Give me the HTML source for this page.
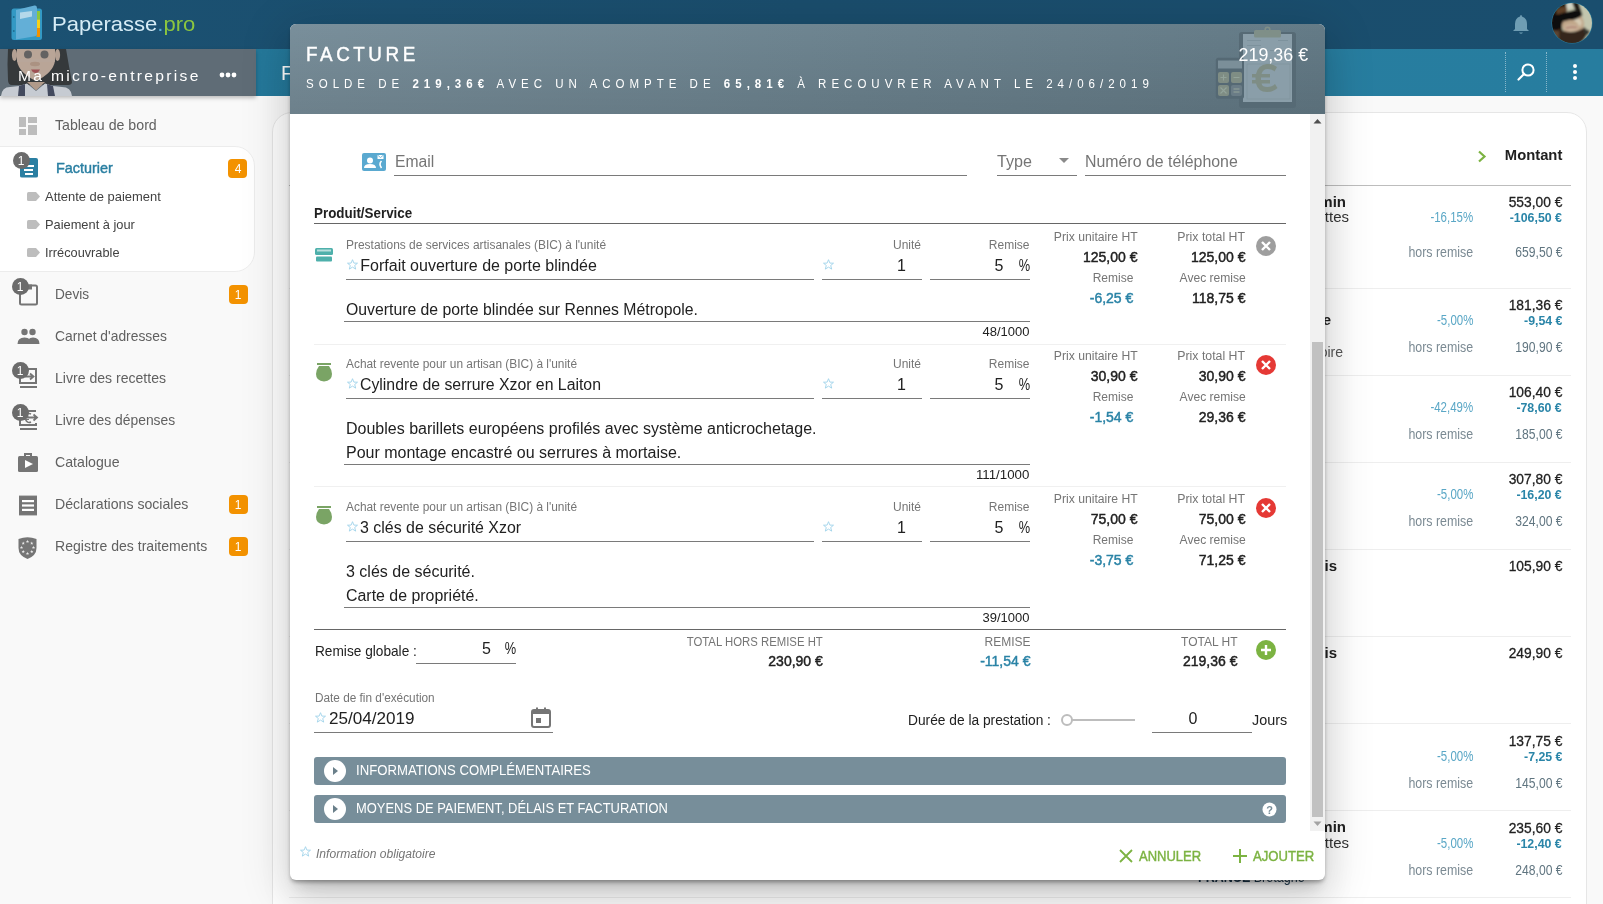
<!DOCTYPE html>
<html><head><meta charset="utf-8"><title>Facture</title><style>
*{margin:0;padding:0;box-sizing:border-box}
html,body{width:1603px;height:904px;overflow:hidden;background:#f9f9f9;font-family:"Liberation Sans", sans-serif}
.t{position:absolute;white-space:nowrap;line-height:1em;font-family:"Liberation Sans", sans-serif}
#bg{position:absolute;left:0;top:0;width:1603px;height:904px;overflow:hidden;will-change:transform}
#modal{position:absolute;left:290px;top:24px;width:1035px;height:856px;border-radius:6px;background:#fff;
 box-shadow:0 3px 4px -1px rgba(0,0,0,.35),0 11px 15px -7px rgba(0,0,0,.2),0 24px 38px 3px rgba(0,0,0,.08),0 9px 46px 8px rgba(0,0,0,.12)}
#fg{position:absolute;left:0;top:0;width:1603px;height:904px;overflow:hidden;will-change:transform}
</style></head>
<body>
<div id="bg">
<div style="position:absolute;left:0px;top:0px;width:1603px;height:49px;background:linear-gradient(90deg,#1b5172 0%,#1a4d6c 50%,#1a4e6e 100%)"></div>
<div style="position:absolute;left:256px;top:49px;width:1347px;height:47px;background:linear-gradient(90deg,#24789a 0%,#277ea1 30%,#277d9f 100%)"></div>
<div style="position:absolute;left:1505px;top:52px;width:1px;height:40px;border-left:1px dotted rgba(255,255,255,.45)"></div>
<div style="position:absolute;left:1546px;top:52px;width:1px;height:40px;border-left:1px dotted rgba(255,255,255,.45)"></div>
<div style="position:absolute;left:0px;top:49px;width:256px;height:47px;background:#5f6c76;box-shadow:0 2px 4px rgba(0,0,0,.25)"></div>
<svg style="position:absolute;left:0px;top:49px" width="76" height="47" viewBox="0 0 76 47">
<path d="M8 0 L66 0 Q69 18 72 33 Q72 36 68 36 L12 36 Q8 36 8 31 Q7 15 8 0 Z" fill="#35393b"/>
<ellipse cx="14.5" cy="6" rx="2.6" ry="6" fill="#b3a093"/><ellipse cx="57.5" cy="6" rx="2.6" ry="6" fill="#b3a093"/>
<path d="M17 0 L55 0 L55 12 Q53 24 36 32 Q19 24 17 12 Z" fill="#b9a597"/>
<rect x="17" y="10" width="38" height="3" fill="#b7a79c" opacity="0.6"/>
<circle cx="28" cy="5.5" r="4" fill="#636262"/><circle cx="44.5" cy="5.5" r="4" fill="#636262"/>
<ellipse cx="35" cy="15" rx="5" ry="2.2" fill="#ab9282"/>
<path d="M31 20.5 L40 20.5 Q38 24.5 35 24 Q32 23 31 20.5 Z" fill="#9e5054"/>
<path d="M27 33 L45 33 L36 41.5 Z" fill="#b09a8a"/>
<path d="M1 47 Q2 38 10 38 L19 37 L27 34.5 L36 42 L45 34.5 L53 37 L62 38 Q71 38 72 47 Z" fill="#c6cbd2"/>
<path d="M19 37 L25 35 L25 47 L18 47 Z" fill="#434a5e"/><path d="M47 35 L53 37 L55 47 L48 47 Z" fill="#434a5e"/>
</svg>
<svg style="position:absolute;left:219px;top:72px" width="18" height="6" viewBox="0 0 18 6"><circle cx="3" cy="3" r="2.4" fill="#fff"/><circle cx="9" cy="3" r="2.4" fill="#fff"/><circle cx="15" cy="3" r="2.4" fill="#fff"/></svg>
<svg style="position:absolute;left:0px;top:0px" width="50" height="49" viewBox="0 0 50 49">
<rect x="11.5" y="8.5" width="30.5" height="31.5" rx="2.5" fill="#3399c4"/>
<rect x="36.5" y="11" width="3.5" height="8.5" fill="#8cc63f"/><rect x="36.5" y="19.5" width="3.5" height="8.5" fill="#f7d117"/><rect x="36.5" y="28" width="3.5" height="9" fill="#f39200"/>
<path d="M16 10 L34.5 5.5 Q37 5 37 8 L37 34 Q37 36 35 36.3 L16 39.5 Z" fill="#63afd7"/>
<path d="M20 12.5 L32 11 L32 16.5 L20 19 Z" fill="#b5d8ea"/>
<circle cx="13.8" cy="17" r="0.9" fill="#1f6d90"/><circle cx="13.8" cy="31" r="0.9" fill="#1f6d90"/>
</svg>
<svg style="position:absolute;left:1512px;top:13px" width="18" height="22" viewBox="0 0 18 22"><path d="M9 2 Q10 2 10 3.5 Q15 5 15 11 L15 16 L17 18 L1 18 L3 16 L3 11 Q3 5 8 3.5 Q8 2 9 2 Z" fill="#6f9db3"/><path d="M7 19.5 Q9 22 11 19.5 Z" fill="#6f9db3"/></svg>
<svg style="position:absolute;left:1551px;top:2px" width="42" height="42" viewBox="0 0 42 42">
<defs><clipPath id="avc"><circle cx="21" cy="21" r="20"/></clipPath><filter id="avb"><feGaussianBlur stdDeviation="0.8"/></filter></defs>
<circle cx="21" cy="21" r="20.6" fill="#2a7896"/>
<g clip-path="url(#avc)"><g filter="url(#avb)">
<rect x="-2" y="-2" width="46" height="46" fill="#c3c6ae"/>
<path d="M-2 -2 L17 -2 L14 8 L10 16 L12 34 L4 40 L-2 40 Z" fill="#22170c"/>
<path d="M5 7 Q10 4 17 5 L15 11 L6 14 Z" fill="#5e4028"/>
<path d="M15 -2 L22 -2 L23 5 L16 7 Z" fill="#d4d4c6"/>
<path d="M12 14 L29 12 Q33 17 33 23 L31 29 L14 30 Q9 23 12 14 Z" fill="#bfa588"/>
<path d="M24 15 Q30 16 31 21 L29 25 Q26 20 22 18 Z" fill="#d6cab2"/>
<path d="M2 14 L13 10.5 L29.5 6.5 L31.5 13 Q26 18.5 18 18 L12 19.5 L8 30 L1 30 Z" fill="#0d0b09"/>
<path d="M20 -2 L27 -2 L30 9 L25 10 Z" fill="#221d18"/>
<path d="M14 23 Q20 21.5 27 23.5 L27.5 28 Q20 30 14 28.5 Z" fill="#ccb39a"/>
<path d="M15 26 Q20 24.5 26 25.5" stroke="#8a4a4a" stroke-width="0.9" fill="none"/>
<path d="M7 26 Q14 30.5 20 30 Q27 30 34 25 L36 33 Q30 44 21 44 Q11 43 6 36 Z" fill="#35251a"/>
<path d="M2 28 L8 29 L8 40 L2 37 Z" fill="#5d4430"/>
<path d="M33 26 L39 29 L37 33 L33 31 Z" fill="#30302a"/>
</g></g></svg>
<svg style="position:absolute;left:1516px;top:62px" width="20" height="20" viewBox="0 0 20 20"><circle cx="12" cy="8" r="5.6" stroke="#fff" stroke-width="2" fill="none"/><path d="M8 12 L2.5 17.5" stroke="#fff" stroke-width="2.2" stroke-linecap="round"/></svg>
<svg style="position:absolute;left:1571px;top:63px" width="8" height="18" viewBox="0 0 8 18"><circle cx="4" cy="3" r="2" fill="#fff"/><circle cx="4" cy="9" r="2" fill="#fff"/><circle cx="4" cy="15" r="2" fill="#fff"/></svg>
<div style="position:absolute;left:-1px;top:146px;width:256px;height:126px;background:#fff;border:1px solid #ececec;border-radius:0 20px 20px 0"></div>
<svg style="position:absolute;left:19px;top:117px" width="18" height="18" viewBox="0 0 18 18"><rect x="0" y="0" width="7" height="10" fill="#bdbdbd"/><rect x="9" y="0" width="9" height="6" fill="#bdbdbd"/><rect x="0" y="12" width="7" height="6" fill="#bdbdbd"/><rect x="9" y="8" width="9" height="10" fill="#bdbdbd"/></svg>
<svg style="position:absolute;left:19px;top:157px" width="20" height="21" viewBox="0 0 20 21"><path d="M1 3 Q1 1 3 1 L17 1 Q19 1 19 3 L19 19 Q19 20.5 17 20.5 L3 20.5 Q1 20.5 1 19 Z" fill="#2a7fa2"/><rect x="6" y="8" width="9" height="2" fill="#fff"/><rect x="5" y="12" width="9" height="2" fill="#fff"/><rect x="6" y="16" width="8" height="2" fill="#fff"/></svg>
<svg style="position:absolute;left:26.5px;top:192px" width="13" height="9" viewBox="0 0 13 9"><path d="M1.5 0 L9 0 L13 4.5 L9 9 L1.5 9 Q0 9 0 7.5 L0 1.5 Q0 0 1.5 0 Z" fill="#bdbdbd"/></svg>
<svg style="position:absolute;left:26.5px;top:220px" width="13" height="9" viewBox="0 0 13 9"><path d="M1.5 0 L9 0 L13 4.5 L9 9 L1.5 9 Q0 9 0 7.5 L0 1.5 Q0 0 1.5 0 Z" fill="#bdbdbd"/></svg>
<svg style="position:absolute;left:26.5px;top:248px" width="13" height="9" viewBox="0 0 13 9"><path d="M1.5 0 L9 0 L13 4.5 L9 9 L1.5 9 Q0 9 0 7.5 L0 1.5 Q0 0 1.5 0 Z" fill="#bdbdbd"/></svg>
<div style="position:absolute;left:228.5px;top:284.5px;width:19px;height:19px;background:#f39200;border-radius:4px"></div>
<div style="position:absolute;left:228.5px;top:494.5px;width:19px;height:19px;background:#f39200;border-radius:4px"></div>
<div style="position:absolute;left:228.5px;top:536.5px;width:19px;height:19px;background:#f39200;border-radius:4px"></div>
<div style="position:absolute;left:228.4px;top:158.7px;width:19px;height:19px;background:#f39200;border-radius:4px"></div>
<svg style="position:absolute;left:18px;top:283px" width="21" height="23" viewBox="0 0 21 23"><rect x="2" y="2.5" width="17" height="19" rx="1.5" fill="none" stroke="#757575" stroke-width="2"/><rect x="9" y="1.5" width="5" height="5" fill="#757575"/></svg>
<svg style="position:absolute;left:17px;top:328px" width="23" height="17" viewBox="0 0 23 17"><circle cx="7.5" cy="4" r="3.2" fill="#757575"/><circle cx="15.5" cy="4" r="3.2" fill="#757575"/><path d="M0.5 16 Q0.5 9.5 7.5 9.5 Q14.5 9.5 14.5 16 Z" fill="#757575"/><path d="M10 16 Q10 9.5 16 9.5 Q22.5 9.5 22.5 16 Z" fill="#757575"/></svg>
<svg style="position:absolute;left:18px;top:367px" width="21" height="23" viewBox="0 0 21 23"><path d="M7 2 L18 2 L18 16 L2 16 L2 10" fill="none" stroke="#757575" stroke-width="2"/><rect x="2" y="19" width="17" height="2" fill="#757575"/><path d="M7 9.5 L15 9.5 M12 6.5 L15.5 9.5 L12 12.5" stroke="#757575" stroke-width="1.8" fill="none"/></svg>
<svg style="position:absolute;left:18px;top:409px" width="21" height="23" viewBox="0 0 21 23"><path d="M7 2 L18 2 M18 14 L18 16 L2 16 L2 10" fill="none" stroke="#757575" stroke-width="2"/><rect x="2" y="19" width="17" height="2" fill="#757575"/><path d="M8 8.5 L18.5 8.5 M15.5 5.5 L19 8.5 L15.5 11.5" stroke="#757575" stroke-width="1.8" fill="none"/><path d="M13 5 Q11 4 9.5 5 Q7.5 6.5 7.5 9 Q7.5 12 9.5 13 Q11 14 13 13" stroke="#757575" stroke-width="1.5" fill="none"/><path d="M6 8 L11 8 M6 10.5 L11 10.5" stroke="#757575" stroke-width="1.2"/></svg>
<svg style="position:absolute;left:18px;top:453px" width="20" height="19" viewBox="0 0 20 19"><path d="M7 3 L7 1 L13 1 L13 3" stroke="#757575" stroke-width="2" fill="none"/><rect x="0" y="3" width="20" height="16" rx="1.5" fill="#757575"/><path d="M7 7 L15 11 L7 15 Z" fill="#fff"/></svg>
<svg style="position:absolute;left:19px;top:495px" width="18" height="21" viewBox="0 0 18 21"><path d="M0 0 L1 1.2 L2 0 L3 1.2 L4 0 L5 1.2 L6 0 L7 1.2 L8 0 L9 1.2 L10 0 L11 1.2 L12 0 L13 1.2 L14 0 L15 1.2 L16 0 L17 1.2 L18 0 L18 21 L17 19.8 L16 21 L15 19.8 L14 21 L13 19.8 L12 21 L11 19.8 L10 21 L9 19.8 L8 21 L7 19.8 L6 21 L5 19.8 L4 21 L3 19.8 L2 21 L1 19.8 L0 21 Z" fill="#757575"/><rect x="3" y="5" width="12" height="2.2" fill="#fff"/><rect x="3" y="9.4" width="12" height="2.2" fill="#fff"/><rect x="3" y="13.8" width="12" height="2.2" fill="#fff"/></svg>
<svg style="position:absolute;left:17px;top:536px" width="21" height="23" viewBox="0 0 21 23"><path d="M1.5 3 Q10.5 -0.5 19.5 3 L19.5 12 Q19.5 19.5 10.5 23 Q1.5 19.5 1.5 12 Z" fill="#757575"/><path d="M10.50 3.80 L10.95 4.88 L12.12 4.97 L11.23 5.74 L11.50 6.88 L10.50 6.26 L9.50 6.88 L9.77 5.74 L8.88 4.97 L10.05 4.88 Z" fill="#e8e8e8"/><path d="M14.74 5.56 L15.19 6.64 L16.36 6.73 L15.47 7.49 L15.74 8.63 L14.74 8.02 L13.74 8.63 L14.02 7.49 L13.13 6.73 L14.29 6.64 Z" fill="#e8e8e8"/><path d="M16.50 9.80 L16.95 10.88 L18.12 10.97 L17.23 11.74 L17.50 12.88 L16.50 12.27 L15.50 12.88 L15.77 11.74 L14.88 10.97 L16.05 10.88 Z" fill="#e8e8e8"/><path d="M14.74 14.04 L15.19 15.12 L16.36 15.22 L15.47 15.98 L15.74 17.12 L14.74 16.51 L13.74 17.12 L14.02 15.98 L13.13 15.22 L14.29 15.12 Z" fill="#e8e8e8"/><path d="M10.50 15.80 L10.95 16.88 L12.12 16.97 L11.23 17.74 L11.50 18.88 L10.50 18.27 L9.50 18.88 L9.77 17.74 L8.88 16.97 L10.05 16.88 Z" fill="#e8e8e8"/><path d="M6.26 14.04 L6.71 15.12 L7.87 15.22 L6.98 15.98 L7.26 17.12 L6.26 16.51 L5.26 17.12 L5.53 15.98 L4.64 15.22 L5.81 15.12 Z" fill="#e8e8e8"/><path d="M4.50 9.80 L4.95 10.88 L6.12 10.97 L5.23 11.74 L5.50 12.88 L4.50 12.27 L3.50 12.88 L3.77 11.74 L2.88 10.97 L4.05 10.88 Z" fill="#e8e8e8"/><path d="M6.26 5.56 L6.71 6.64 L7.87 6.73 L6.98 7.49 L7.26 8.63 L6.26 8.02 L5.26 8.63 L5.53 7.49 L4.64 6.73 L5.81 6.64 Z" fill="#e8e8e8"/></svg>
<div style="position:absolute;left:12.5px;top:152.1px;width:17px;height:17px;background:#6b6b6b;border-radius:50%"></div>
<div style="position:absolute;left:11.5px;top:278.0px;width:17px;height:17px;background:#6b6b6b;border-radius:50%"></div>
<div style="position:absolute;left:11.5px;top:362.0px;width:17px;height:17px;background:#6b6b6b;border-radius:50%"></div>
<div style="position:absolute;left:11.5px;top:404.0px;width:17px;height:17px;background:#6b6b6b;border-radius:50%"></div>
<div style="position:absolute;left:272px;top:112px;width:1314.5px;height:900px;background:#fff;border:1px solid #e6e6e6;border-radius:20px"></div>
<div style="position:absolute;left:289px;top:185px;width:1282px;height:1px;background:#bdbdbd"></div>
<div style="position:absolute;left:289px;top:288.4px;width:1282px;height:1px;background:#eeeeee"></div>
<div style="position:absolute;left:289px;top:375.4px;width:1282px;height:1px;background:#eeeeee"></div>
<div style="position:absolute;left:289px;top:462.4px;width:1282px;height:1px;background:#eeeeee"></div>
<div style="position:absolute;left:289px;top:549.4px;width:1282px;height:1px;background:#eeeeee"></div>
<div style="position:absolute;left:289px;top:636.4px;width:1282px;height:1px;background:#eeeeee"></div>
<div style="position:absolute;left:289px;top:723.4px;width:1282px;height:1px;background:#eeeeee"></div>
<div style="position:absolute;left:289px;top:810.4px;width:1282px;height:1px;background:#eeeeee"></div>
<div style="position:absolute;left:289px;top:897.4px;width:1282px;height:1px;background:#eeeeee"></div>
<svg style="position:absolute;left:1477px;top:150px" width="10" height="13" viewBox="0 0 10 13"><path d="M2 1.5 L7.5 6.5 L2 11.5" stroke="#7cb342" stroke-width="2.2" fill="none"/></svg>
<div class="t" id="t0" style="top:68px;font-size:15px;color:#fff;letter-spacing:2.2px;left:18px;transform:scaleX(1.0431);transform-origin:left;">Ma micro-entreprise</div>
<div class="t" id="t1" style="top:13px;font-size:21px;color:#d6ecf6;left:52px;transform:scaleX(1.0494);transform-origin:left;">Paperasse<span style="color:#5aa9d0">.</span><span style="color:#8cc63f">pro</span></div>
<div class="t" id="t2" style="top:63px;font-size:20px;color:#fff;left:281px;">Facturier</div>
<div class="t" id="t3" style="top:117px;font-size:15px;color:#616161;left:55px;transform:scaleX(0.9457);transform-origin:left;">Tableau de bord</div>
<div class="t" id="t4" style="top:160px;font-size:15px;color:#2a7fa2;-webkit-text-stroke:0.45px #2a7fa2;left:55.5px;transform:scaleX(0.9602);transform-origin:left;">Facturier</div>
<div class="t" id="t5" style="top:190px;font-size:13px;color:#424242;left:44.6px;transform:scaleX(0.9951);transform-origin:left;">Attente de paiement</div>
<div class="t" id="t6" style="top:218px;font-size:13px;color:#424242;left:44.6px;transform:scaleX(0.9871);transform-origin:left;">Paiement à jour</div>
<div class="t" id="t7" style="top:246px;font-size:13px;color:#424242;left:44.6px;transform:scaleX(0.9819);transform-origin:left;">Irrécouvrable</div>
<div class="t" id="t8" style="top:286px;font-size:15px;color:#616161;left:55.3px;transform:scaleX(0.9103);transform-origin:left;">Devis</div>
<div class="t" id="t9" style="top:289px;font-size:12px;color:#fff;left:238px;transform:translateX(-50%);">1</div>
<div class="t" id="t10" style="top:328px;font-size:15px;color:#616161;left:55.3px;transform:scaleX(0.9224);transform-origin:left;">Carnet d'adresses</div>
<div class="t" id="t11" style="top:370px;font-size:15px;color:#616161;left:55.3px;transform:scaleX(0.9375);transform-origin:left;">Livre des recettes</div>
<div class="t" id="t12" style="top:412px;font-size:15px;color:#616161;left:55.3px;transform:scaleX(0.9239);transform-origin:left;">Livre des dépenses</div>
<div class="t" id="t13" style="top:454px;font-size:15px;color:#616161;left:55.3px;transform:scaleX(0.9431);transform-origin:left;">Catalogue</div>
<div class="t" id="t14" style="top:496px;font-size:15px;color:#616161;left:55.3px;transform:scaleX(0.9411);transform-origin:left;">Déclarations sociales</div>
<div class="t" id="t15" style="top:499px;font-size:12px;color:#fff;left:238px;transform:translateX(-50%);">1</div>
<div class="t" id="t16" style="top:538px;font-size:15px;color:#616161;left:55.3px;transform:scaleX(0.9363);transform-origin:left;">Registre des traitements</div>
<div class="t" id="t17" style="top:541px;font-size:12px;color:#fff;left:238px;transform:translateX(-50%);">1</div>
<div class="t" id="t18" style="top:163px;font-size:12px;color:#fff;left:238px;transform:translateX(-50%);">4</div>
<div class="t" id="t19" style="top:155px;font-size:12px;color:#fff;left:21px;transform:translateX(-50%);">1</div>
<div class="t" id="t20" style="top:281px;font-size:12px;color:#fff;left:20px;transform:translateX(-50%);">1</div>
<div class="t" id="t21" style="top:365px;font-size:12px;color:#fff;left:20px;transform:translateX(-50%);">1</div>
<div class="t" id="t22" style="top:407px;font-size:12px;color:#fff;left:20px;transform:translateX(-50%);">1</div>
<div class="t" id="t23" style="top:147px;font-size:15px;color:#212121;font-weight:700;right:41px;transform:scaleX(0.9859);transform-origin:right;">Montant</div>
<div class="t" id="t24" style="top:194px;font-size:15px;color:#212121;right:41px;transform:scaleX(0.9200);transform-origin:right;-webkit-text-stroke:0.3px #212121;">553,00 €</div>
<div class="t" id="t25" style="top:211px;font-size:13px;color:#2a85a8;font-weight:700;right:41px;transform:scaleX(0.9500);transform-origin:right;">-106,50 €</div>
<div class="t" id="t26" style="top:210px;font-size:14px;color:#5aa7c6;right:130px;transform:scaleX(0.8200);transform-origin:right;">-16,15%</div>
<div class="t" id="t27" style="top:245px;font-size:14px;color:#7b8a93;right:130px;transform:scaleX(0.8850);transform-origin:right;">hors remise</div>
<div class="t" id="t28" style="top:245px;font-size:14px;color:#607580;right:41px;transform:scaleX(0.8660);transform-origin:right;">659,50 €</div>
<div class="t" id="t29" style="top:297px;font-size:15px;color:#212121;right:41px;transform:scaleX(0.9200);transform-origin:right;-webkit-text-stroke:0.3px #212121;">181,36 €</div>
<div class="t" id="t30" style="top:314px;font-size:13px;color:#2a85a8;font-weight:700;right:41px;transform:scaleX(0.9500);transform-origin:right;">-9,54 €</div>
<div class="t" id="t31" style="top:313px;font-size:14px;color:#5aa7c6;right:130px;transform:scaleX(0.8200);transform-origin:right;">-5,00%</div>
<div class="t" id="t32" style="top:340px;font-size:14px;color:#7b8a93;right:130px;transform:scaleX(0.8850);transform-origin:right;">hors remise</div>
<div class="t" id="t33" style="top:340px;font-size:14px;color:#607580;right:41px;transform:scaleX(0.8660);transform-origin:right;">190,90 €</div>
<div class="t" id="t34" style="top:384px;font-size:15px;color:#212121;right:41px;transform:scaleX(0.9200);transform-origin:right;-webkit-text-stroke:0.3px #212121;">106,40 €</div>
<div class="t" id="t35" style="top:401px;font-size:13px;color:#2a85a8;font-weight:700;right:41px;transform:scaleX(0.9500);transform-origin:right;">-78,60 €</div>
<div class="t" id="t36" style="top:400px;font-size:14px;color:#5aa7c6;right:130px;transform:scaleX(0.8200);transform-origin:right;">-42,49%</div>
<div class="t" id="t37" style="top:427px;font-size:14px;color:#7b8a93;right:130px;transform:scaleX(0.8850);transform-origin:right;">hors remise</div>
<div class="t" id="t38" style="top:427px;font-size:14px;color:#607580;right:41px;transform:scaleX(0.8660);transform-origin:right;">185,00 €</div>
<div class="t" id="t39" style="top:471px;font-size:15px;color:#212121;right:41px;transform:scaleX(0.9200);transform-origin:right;-webkit-text-stroke:0.3px #212121;">307,80 €</div>
<div class="t" id="t40" style="top:488px;font-size:13px;color:#2a85a8;font-weight:700;right:41px;transform:scaleX(0.9500);transform-origin:right;">-16,20 €</div>
<div class="t" id="t41" style="top:487px;font-size:14px;color:#5aa7c6;right:130px;transform:scaleX(0.8200);transform-origin:right;">-5,00%</div>
<div class="t" id="t42" style="top:514px;font-size:14px;color:#7b8a93;right:130px;transform:scaleX(0.8850);transform-origin:right;">hors remise</div>
<div class="t" id="t43" style="top:514px;font-size:14px;color:#607580;right:41px;transform:scaleX(0.8660);transform-origin:right;">324,00 €</div>
<div class="t" id="t44" style="top:558px;font-size:15px;color:#212121;right:41px;transform:scaleX(0.9200);transform-origin:right;-webkit-text-stroke:0.3px #212121;">105,90 €</div>
<div class="t" id="t45" style="top:645px;font-size:15px;color:#212121;right:41px;transform:scaleX(0.9200);transform-origin:right;-webkit-text-stroke:0.3px #212121;">249,90 €</div>
<div class="t" id="t46" style="top:733px;font-size:15px;color:#212121;right:41px;transform:scaleX(0.9200);transform-origin:right;-webkit-text-stroke:0.3px #212121;">137,75 €</div>
<div class="t" id="t47" style="top:750px;font-size:13px;color:#2a85a8;font-weight:700;right:41px;transform:scaleX(0.9500);transform-origin:right;">-7,25 €</div>
<div class="t" id="t48" style="top:749px;font-size:14px;color:#5aa7c6;right:130px;transform:scaleX(0.8200);transform-origin:right;">-5,00%</div>
<div class="t" id="t49" style="top:776px;font-size:14px;color:#7b8a93;right:130px;transform:scaleX(0.8850);transform-origin:right;">hors remise</div>
<div class="t" id="t50" style="top:776px;font-size:14px;color:#607580;right:41px;transform:scaleX(0.8660);transform-origin:right;">145,00 €</div>
<div class="t" id="t51" style="top:820px;font-size:15px;color:#212121;right:41px;transform:scaleX(0.9200);transform-origin:right;-webkit-text-stroke:0.3px #212121;">235,60 €</div>
<div class="t" id="t52" style="top:837px;font-size:13px;color:#2a85a8;font-weight:700;right:41px;transform:scaleX(0.9500);transform-origin:right;">-12,40 €</div>
<div class="t" id="t53" style="top:836px;font-size:14px;color:#5aa7c6;right:130px;transform:scaleX(0.8200);transform-origin:right;">-5,00%</div>
<div class="t" id="t54" style="top:863px;font-size:14px;color:#7b8a93;right:130px;transform:scaleX(0.8850);transform-origin:right;">hors remise</div>
<div class="t" id="t55" style="top:863px;font-size:14px;color:#607580;right:41px;transform:scaleX(0.8660);transform-origin:right;">248,00 €</div>
<div class="t" id="t56" style="top:194px;font-size:15px;color:#212121;font-weight:700;right:257px;">min</div>
<div class="t" id="t57" style="top:209px;font-size:15px;color:#333;right:254px;">ttes</div>
<div class="t" id="t58" style="top:312px;font-size:15px;color:#212121;font-weight:700;right:272px;">e</div>
<div class="t" id="t59" style="top:345px;font-size:14px;color:#555;right:260px;">oire</div>
<div class="t" id="t60" style="top:558px;font-size:15px;color:#212121;font-weight:700;right:266px;">ris</div>
<div class="t" id="t61" style="top:645px;font-size:15px;color:#212121;font-weight:700;right:266px;">ris</div>
<div class="t" id="t62" style="top:819px;font-size:15px;color:#212121;font-weight:700;right:257px;">min</div>
<div class="t" id="t63" style="top:835px;font-size:15px;color:#333;right:254px;">ttes</div>
<div class="t" id="t64" style="top:869px;font-size:15px;color:#1e3a50;left:1198px;transform:scaleX(0.8360);transform-origin:left;"><b>FRANCE</b> Bretagne</div>
</div>
<div id="modal"></div>
<div id="fg">
<div style="position:absolute;left:290px;top:24px;width:1035px;height:90px;background:linear-gradient(180deg,rgba(0,0,0,0) 0%,rgba(0,0,0,.1) 100%),linear-gradient(90deg,#798f9b 0%,#6e8591 50%,#647b87 100%);border-radius:6px 6px 0 0"></div>
<svg style="position:absolute;left:1212px;top:26px" width="90" height="84" viewBox="0 0 90 84">
<rect x="27" y="6" width="57" height="76" rx="3" fill="#566a75"/>
<rect x="31" y="8" width="49" height="68" fill="#8a9ea9"/>
<rect x="35" y="14" width="14" height="1" fill="#7d929d"/><rect x="66" y="14" width="10" height="1" fill="#7d929d"/>
<rect x="35" y="19" width="14" height="1" fill="#7d929d"/><rect x="58" y="24" width="16" height="1" fill="#7d929d"/>
<rect x="35" y="38" width="43" height="35" fill="none" stroke="#7f949f" stroke-width="0.8"/>
<rect x="42" y="4" width="27" height="7.5" rx="1.5" fill="#7f8f88"/>
<circle cx="55.5" cy="3.5" r="2.3" fill="none" stroke="#7f8f88" stroke-width="1.6"/>
<path d="M65 41 Q60 37.5 55 38 Q46 39 44 48 L40 48 L40 51.5 L43.5 51.5 L43.5 54 L40 54 L40 57.5 L44 57.5 Q46 66 55 66 Q61 66 65.5 62 L63 58 Q60 61 55.5 61 Q50 61 49.5 57.5 L58 57.5 L58 54 L49 54 L49 51.5 L58 51.5 L58 48 L49.5 48 Q51 43 55.5 43 Q60 43 62.5 45.5 Z" fill="#7e8d85"/>
<rect x="3.8" y="31.8" width="28.2" height="41" rx="2.5" fill="#556974"/>
<rect x="6" y="34.5" width="24" height="8" fill="#7b8f99"/>
<rect x="6" y="46" width="11" height="11" rx="2" fill="#7f8d84"/><rect x="19" y="46" width="11" height="11" rx="2" fill="#7f8d84"/>
<rect x="6" y="59" width="11" height="11" rx="2" fill="#7f8d84"/><rect x="19" y="59" width="11" height="11" rx="2" fill="#6a7c86"/>
<path d="M11.5 48.5 L11.5 54.5 M8.5 51.5 L14.5 51.5 M21.5 51.5 L27.5 51.5 M8.5 61.5 L14.5 67.5 M14.5 61.5 L8.5 67.5 M21.5 63 L27.5 63 M21.5 66 L27.5 66" stroke="#93a39a" stroke-width="1.1"/>
</svg>
<div style="position:absolute;left:1310px;top:114px;width:15px;height:717px;background:#f1f1f1"></div>
<div style="position:absolute;left:1312px;top:342px;width:11px;height:475px;background:#c1c1c1"></div>
<svg style="position:absolute;left:1312px;top:117px" width="11" height="8" viewBox="0 0 11 8"><path d="M1.5 6.5 L5.5 2 L9.5 6.5 Z" fill="#505050"/></svg>
<svg style="position:absolute;left:1312px;top:820px" width="11" height="8" viewBox="0 0 11 8"><path d="M1.5 1.5 L5.5 6 L9.5 1.5 Z" fill="#a3a3a3"/></svg>
<svg style="position:absolute;left:362px;top:153px" width="24" height="18" viewBox="0 0 24 18"><rect x="0" y="0" width="24" height="18" rx="2" fill="#5aa9d0"/>
<circle cx="8" cy="7.5" r="3" fill="#fff"/><path d="M2 15 Q2 11 8 11 Q14 11 14 15 Z" fill="#fff"/>
<rect x="15.5" y="2" width="6" height="4" fill="#fff"/><path d="M15.5 2 L18.5 4.5 L21.5 2" stroke="#5aa9d0" stroke-width="0.8" fill="none"/>
<path d="M19.5 8 Q16.5 11 19.5 15" stroke="#fff" stroke-width="1.6" fill="none"/></svg>
<div style="position:absolute;left:394px;top:175px;width:573px;height:1px;background:#7a7a7a"></div>
<svg style="position:absolute;left:1059px;top:158px" width="11" height="6" viewBox="0 0 11 6"><path d="M0 0 L10 0 L5 5 Z" fill="#8a8a8a"/></svg>
<div style="position:absolute;left:997px;top:175px;width:80px;height:1px;background:#7a7a7a"></div>
<div style="position:absolute;left:1085px;top:175px;width:201px;height:1px;background:#7a7a7a"></div>
<div style="position:absolute;left:314px;top:223px;width:972px;height:1px;background:#666"></div>
<svg style="position:absolute;left:315px;top:248.4px" width="18" height="14" viewBox="0 0 18 14"><rect x="0" y="0" width="18" height="7" rx="1.5" fill="#4eb0ab"/><rect x="2" y="1.5" width="14" height="2" fill="#fff" opacity="0.6"/><rect x="1" y="8.5" width="16" height="5" rx="1" fill="#4eb0ab"/></svg>
<svg style="position:absolute;left:347px;top:259px" width="11" height="11" viewBox="0 0 11 11"><path d="M5.5 0.7 L6.9 4.1 L10.5 4.2 L7.7 6.5 L8.7 10.1 L5.5 8.1 L2.3 10.1 L3.3 6.5 L0.5 4.2 L4.1 4.1 Z" fill="none" stroke="#9fd2ea" stroke-width="0.9" stroke-linejoin="round"/></svg>
<div style="position:absolute;left:346px;top:279px;width:468px;height:1px;background:#7a7a7a"></div>
<svg style="position:absolute;left:823px;top:259px" width="11" height="11" viewBox="0 0 11 11"><path d="M5.5 0.7 L6.9 4.1 L10.5 4.2 L7.7 6.5 L8.7 10.1 L5.5 8.1 L2.3 10.1 L3.3 6.5 L0.5 4.2 L4.1 4.1 Z" fill="none" stroke="#9fd2ea" stroke-width="0.9" stroke-linejoin="round"/></svg>
<div style="position:absolute;left:822px;top:279px;width:100px;height:1px;background:#7a7a7a"></div>
<div style="position:absolute;left:930px;top:279px;width:100px;height:1px;background:#7a7a7a"></div>
<div style="position:absolute;left:344px;top:321px;width:686px;height:1px;background:#7a7a7a"></div>
<svg style="position:absolute;left:1256px;top:236px" width="20" height="20" viewBox="0 0 20 20"><circle cx="10" cy="10" r="10" fill="#9e9e9e"/><path d="M6 6 L14 14 M14 6 L6 14" stroke="#fff" stroke-width="2.4"/></svg>
<div style="position:absolute;left:314px;top:344px;width:972px;height:1px;background:#f0f0f0"></div>
<svg style="position:absolute;left:316px;top:363.4px" width="16" height="19" viewBox="0 0 16 19"><rect x="1" y="0" width="14" height="2" fill="#7aa465"/><path d="M3 3 L13 3 Q16 7 16 11 Q16 18 8 18.5 Q0 18 0 11 Q0 7 3 3 Z" fill="#7aa465"/></svg>
<svg style="position:absolute;left:347px;top:378px" width="11" height="11" viewBox="0 0 11 11"><path d="M5.5 0.7 L6.9 4.1 L10.5 4.2 L7.7 6.5 L8.7 10.1 L5.5 8.1 L2.3 10.1 L3.3 6.5 L0.5 4.2 L4.1 4.1 Z" fill="none" stroke="#9fd2ea" stroke-width="0.9" stroke-linejoin="round"/></svg>
<div style="position:absolute;left:346px;top:398px;width:468px;height:1px;background:#7a7a7a"></div>
<svg style="position:absolute;left:823px;top:378px" width="11" height="11" viewBox="0 0 11 11"><path d="M5.5 0.7 L6.9 4.1 L10.5 4.2 L7.7 6.5 L8.7 10.1 L5.5 8.1 L2.3 10.1 L3.3 6.5 L0.5 4.2 L4.1 4.1 Z" fill="none" stroke="#9fd2ea" stroke-width="0.9" stroke-linejoin="round"/></svg>
<div style="position:absolute;left:822px;top:398px;width:100px;height:1px;background:#7a7a7a"></div>
<div style="position:absolute;left:930px;top:398px;width:100px;height:1px;background:#7a7a7a"></div>
<div style="position:absolute;left:344px;top:464px;width:686px;height:1px;background:#7a7a7a"></div>
<svg style="position:absolute;left:1256px;top:355px" width="20" height="20" viewBox="0 0 20 20"><circle cx="10" cy="10" r="10" fill="#e53935"/><path d="M6 6 L14 14 M14 6 L6 14" stroke="#fff" stroke-width="2.4"/></svg>
<div style="position:absolute;left:314px;top:486px;width:972px;height:1px;background:#f0f0f0"></div>
<svg style="position:absolute;left:316px;top:506.4px" width="16" height="19" viewBox="0 0 16 19"><rect x="1" y="0" width="14" height="2" fill="#7aa465"/><path d="M3 3 L13 3 Q16 7 16 11 Q16 18 8 18.5 Q0 18 0 11 Q0 7 3 3 Z" fill="#7aa465"/></svg>
<svg style="position:absolute;left:347px;top:521px" width="11" height="11" viewBox="0 0 11 11"><path d="M5.5 0.7 L6.9 4.1 L10.5 4.2 L7.7 6.5 L8.7 10.1 L5.5 8.1 L2.3 10.1 L3.3 6.5 L0.5 4.2 L4.1 4.1 Z" fill="none" stroke="#9fd2ea" stroke-width="0.9" stroke-linejoin="round"/></svg>
<div style="position:absolute;left:346px;top:541px;width:468px;height:1px;background:#7a7a7a"></div>
<svg style="position:absolute;left:823px;top:521px" width="11" height="11" viewBox="0 0 11 11"><path d="M5.5 0.7 L6.9 4.1 L10.5 4.2 L7.7 6.5 L8.7 10.1 L5.5 8.1 L2.3 10.1 L3.3 6.5 L0.5 4.2 L4.1 4.1 Z" fill="none" stroke="#9fd2ea" stroke-width="0.9" stroke-linejoin="round"/></svg>
<div style="position:absolute;left:822px;top:541px;width:100px;height:1px;background:#7a7a7a"></div>
<div style="position:absolute;left:930px;top:541px;width:100px;height:1px;background:#7a7a7a"></div>
<div style="position:absolute;left:344px;top:607px;width:686px;height:1px;background:#7a7a7a"></div>
<svg style="position:absolute;left:1256px;top:498px" width="20" height="20" viewBox="0 0 20 20"><circle cx="10" cy="10" r="10" fill="#e53935"/><path d="M6 6 L14 14 M14 6 L6 14" stroke="#fff" stroke-width="2.4"/></svg>
<div style="position:absolute;left:314px;top:629px;width:972px;height:1px;background:#666"></div>
<div style="position:absolute;left:416px;top:663px;width:100px;height:1px;background:#7a7a7a"></div>
<svg style="position:absolute;left:1256px;top:640px" width="20" height="20" viewBox="0 0 20 20"><circle cx="10" cy="10" r="10" fill="#7cb342"/><path d="M10 5 L10 15 M5 10 L15 10" stroke="#fff" stroke-width="2.4"/></svg>
<svg style="position:absolute;left:315px;top:711.5px" width="11" height="11" viewBox="0 0 11 11"><path d="M5.5 0.7 L6.9 4.1 L10.5 4.2 L7.7 6.5 L8.7 10.1 L5.5 8.1 L2.3 10.1 L3.3 6.5 L0.5 4.2 L4.1 4.1 Z" fill="none" stroke="#9fd2ea" stroke-width="0.9" stroke-linejoin="round"/></svg>
<svg style="position:absolute;left:531px;top:707px" width="20" height="21" viewBox="0 0 20 21"><rect x="1" y="3" width="18" height="17" rx="2" fill="none" stroke="#757575" stroke-width="2"/><rect x="1" y="3" width="18" height="4" fill="#757575"/><rect x="5" y="0.5" width="2" height="4" fill="#757575"/><rect x="13" y="0.5" width="2" height="4" fill="#757575"/><rect x="5" y="11" width="5" height="5" fill="#757575"/></svg>
<div style="position:absolute;left:314px;top:732px;width:239px;height:1px;background:#7a7a7a"></div>
<svg style="position:absolute;left:1060px;top:713px" width="78" height="14" viewBox="0 0 78 14"><path d="M12 7 L75 7" stroke="#bdbdbd" stroke-width="2"/><circle cx="7" cy="7" r="5" fill="#fff" stroke="#bdbdbd" stroke-width="2"/></svg>
<div style="position:absolute;left:1151.5px;top:731.5px;width:100px;height:1px;background:#7a7a7a"></div>
<div style="position:absolute;left:314px;top:757px;width:972px;height:27.5px;background:#778e9a;border-radius:3px"></div>
<svg style="position:absolute;left:324px;top:759.5px" width="22" height="22" viewBox="0 0 22 22"><circle cx="11" cy="11" r="11" fill="#fff"/><path d="M9 7 L14 11 L9 15 Z" fill="#6a7f8a"/></svg>
<div style="position:absolute;left:314px;top:795px;width:972px;height:27.5px;background:#778e9a;border-radius:3px"></div>
<svg style="position:absolute;left:324px;top:797.5px" width="22" height="22" viewBox="0 0 22 22"><circle cx="11" cy="11" r="11" fill="#fff"/><path d="M9 7 L14 11 L9 15 Z" fill="#6a7f8a"/></svg>
<svg style="position:absolute;left:1262px;top:802px" width="15" height="15" viewBox="0 0 15 15"><circle cx="7.5" cy="7.5" r="7" fill="#fff"/><text x="7.5" y="11.5" font-size="11" font-weight="bold" text-anchor="middle" fill="#778e9a" font-family="Liberation Sans">?</text></svg>
<svg style="position:absolute;left:299.5px;top:846px" width="11" height="11" viewBox="0 0 11 11"><path d="M5.5 0.7 L6.9 4.1 L10.5 4.2 L7.7 6.5 L8.7 10.1 L5.5 8.1 L2.3 10.1 L3.3 6.5 L0.5 4.2 L4.1 4.1 Z" fill="none" stroke="#9fd2ea" stroke-width="0.9" stroke-linejoin="round"/></svg>
<svg style="position:absolute;left:1119px;top:849px" width="14" height="14" viewBox="0 0 14 14"><path d="M1 1 L13 13 M13 1 L1 13" stroke="#7cb342" stroke-width="1.8"/></svg>
<svg style="position:absolute;left:1233px;top:849px" width="14" height="14" viewBox="0 0 14 14"><path d="M7 0 L7 14 M0 7 L14 7" stroke="#7cb342" stroke-width="2"/></svg>
<div class="t" id="t65" style="top:43px;font-size:21px;color:#fff;-webkit-text-stroke:0.45px #fff;letter-spacing:4px;left:305.5px;transform:scaleX(0.8951);transform-origin:left;">FACTURE</div>
<div class="t" id="t66" style="top:78px;font-size:12px;color:#fff;letter-spacing:5.2px;left:306px;transform:scaleX(0.9603);transform-origin:left;">SOLDE DE <b>219,36€</b> AVEC UN ACOMPTE DE <b>65,81€</b> À RECOUVRER AVANT LE 24/06/2019</div>
<div class="t" id="t67" style="top:46px;font-size:18px;color:#fff;right:294.5px;transform:scaleX(0.9918);transform-origin:right;">219,36 €</div>
<div class="t" id="t68" style="top:154px;font-size:16px;color:#757575;left:394.8px;transform:scaleX(0.9814);transform-origin:left;">Email</div>
<div class="t" id="t69" style="top:154px;font-size:16px;color:#757575;left:997px;transform:scaleX(1.0083);transform-origin:left;">Type</div>
<div class="t" id="t70" style="top:154px;font-size:16px;color:#757575;left:1085.4px;transform:scaleX(0.9927);transform-origin:left;">Numéro de téléphone</div>
<div class="t" id="t71" style="top:206px;font-size:14px;color:#212121;font-weight:700;left:314.4px;transform:scaleX(0.9560);transform-origin:left;">Produit/Service</div>
<div class="t" id="t72" style="top:239px;font-size:12px;color:#757575;left:346.3px;transform:scaleX(0.9960);transform-origin:left;">Prestations de services artisanales (BIC) à l'unité</div>
<div class="t" id="t73" style="top:258px;font-size:16px;color:#212121;left:360.3px;">Forfait ouverture de porte blindée</div>
<div class="t" id="t74" style="top:258px;font-size:16px;color:#212121;right:697px;">1</div>
<div class="t" id="t75" style="top:239px;font-size:12px;color:#757575;right:573.5px;right:682px;">Unité</div>
<div class="t" id="t76" style="top:239px;font-size:12px;color:#757575;right:573.5px;">Remise</div>
<div class="t" id="t77" style="top:258px;font-size:16px;color:#212121;right:599.5px;">5</div>
<div class="t" id="t78" style="top:258px;font-size:16px;color:#212121;right:573px;transform:scaleX(0.8000);transform-origin:right;">%</div>
<div class="t" id="t79" style="top:302px;font-size:16px;color:#212121;left:346px;transform:scaleX(0.9867);transform-origin:left;">Ouverture de porte blindée sur Rennes Métropole.</div>
<div class="t" id="t80" style="top:326px;font-size:12px;color:#212121;right:573.5px;transform:scaleX(1.0823);transform-origin:right;">48/1000</div>
<div class="t" id="t81" style="top:231px;font-size:12px;color:#757575;right:465.5px;transform:scaleX(1.0141);transform-origin:right;">Prix unitaire HT</div>
<div class="t" id="t82" style="top:250px;font-size:14px;color:#212121;-webkit-text-stroke:0.45px #212121;right:465.5px;">125,00 €</div>
<div class="t" id="t83" style="top:272px;font-size:12px;color:#757575;right:469.70000000000005px;">Remise</div>
<div class="t" id="t84" style="top:291px;font-size:14px;color:#2a83a6;-webkit-text-stroke:0.45px #2a83a6;right:469.70000000000005px;">-6,25 €</div>
<div class="t" id="t85" style="top:231px;font-size:12px;color:#757575;right:357.5px;transform:scaleX(1.0255);transform-origin:right;">Prix total HT</div>
<div class="t" id="t86" style="top:250px;font-size:14px;color:#212121;-webkit-text-stroke:0.45px #212121;right:357.5px;">125,00 €</div>
<div class="t" id="t87" style="top:272px;font-size:12px;color:#757575;right:357.5px;transform:scaleX(1.0071);transform-origin:right;">Avec remise</div>
<div class="t" id="t88" style="top:291px;font-size:14px;color:#212121;-webkit-text-stroke:0.45px #212121;right:357.5px;">118,75 €</div>
<div class="t" id="t89" style="top:358px;font-size:12px;color:#757575;left:346.3px;transform:scaleX(0.9912);transform-origin:left;">Achat revente pour un artisan (BIC) à l'unité</div>
<div class="t" id="t90" style="top:377px;font-size:16px;color:#212121;left:360.3px;transform:scaleX(0.9888);transform-origin:left;">Cylindre de serrure Xzor en Laiton</div>
<div class="t" id="t91" style="top:377px;font-size:16px;color:#212121;right:697px;">1</div>
<div class="t" id="t92" style="top:358px;font-size:12px;color:#757575;right:573.5px;right:682px;">Unité</div>
<div class="t" id="t93" style="top:358px;font-size:12px;color:#757575;right:573.5px;">Remise</div>
<div class="t" id="t94" style="top:377px;font-size:16px;color:#212121;right:599.5px;">5</div>
<div class="t" id="t95" style="top:377px;font-size:16px;color:#212121;right:573px;transform:scaleX(0.8000);transform-origin:right;">%</div>
<div class="t" id="t96" style="top:421px;font-size:16px;color:#212121;left:346px;">Doubles barillets européens profilés avec système anticrochetage.</div>
<div class="t" id="t97" style="top:445px;font-size:16px;color:#212121;left:346px;">Pour montage encastré ou serrures à mortaise.</div>
<div class="t" id="t98" style="top:469px;font-size:12px;color:#212121;right:573.5px;transform:scaleX(1.1054);transform-origin:right;">111/1000</div>
<div class="t" id="t99" style="top:350px;font-size:12px;color:#757575;right:465.5px;transform:scaleX(1.0141);transform-origin:right;">Prix unitaire HT</div>
<div class="t" id="t100" style="top:369px;font-size:14px;color:#212121;-webkit-text-stroke:0.45px #212121;right:465.5px;">30,90 €</div>
<div class="t" id="t101" style="top:391px;font-size:12px;color:#757575;right:469.70000000000005px;">Remise</div>
<div class="t" id="t102" style="top:410px;font-size:14px;color:#2a83a6;-webkit-text-stroke:0.45px #2a83a6;right:469.70000000000005px;">-1,54 €</div>
<div class="t" id="t103" style="top:350px;font-size:12px;color:#757575;right:357.5px;transform:scaleX(1.0255);transform-origin:right;">Prix total HT</div>
<div class="t" id="t104" style="top:369px;font-size:14px;color:#212121;-webkit-text-stroke:0.45px #212121;right:357.5px;">30,90 €</div>
<div class="t" id="t105" style="top:391px;font-size:12px;color:#757575;right:357.5px;transform:scaleX(1.0071);transform-origin:right;">Avec remise</div>
<div class="t" id="t106" style="top:410px;font-size:14px;color:#212121;-webkit-text-stroke:0.45px #212121;right:357.5px;">29,36 €</div>
<div class="t" id="t107" style="top:501px;font-size:12px;color:#757575;left:346.3px;transform:scaleX(0.9912);transform-origin:left;">Achat revente pour un artisan (BIC) à l'unité</div>
<div class="t" id="t108" style="top:520px;font-size:16px;color:#212121;left:360.3px;transform:scaleX(0.9955);transform-origin:left;">3 clés de sécurité Xzor</div>
<div class="t" id="t109" style="top:520px;font-size:16px;color:#212121;right:697px;">1</div>
<div class="t" id="t110" style="top:501px;font-size:12px;color:#757575;right:573.5px;right:682px;">Unité</div>
<div class="t" id="t111" style="top:501px;font-size:12px;color:#757575;right:573.5px;">Remise</div>
<div class="t" id="t112" style="top:520px;font-size:16px;color:#212121;right:599.5px;">5</div>
<div class="t" id="t113" style="top:520px;font-size:16px;color:#212121;right:573px;transform:scaleX(0.8000);transform-origin:right;">%</div>
<div class="t" id="t114" style="top:564px;font-size:16px;color:#212121;left:346px;">3 clés de sécurité.</div>
<div class="t" id="t115" style="top:588px;font-size:16px;color:#212121;left:346px;transform:scaleX(0.9945);transform-origin:left;">Carte de propriété.</div>
<div class="t" id="t116" style="top:612px;font-size:12px;color:#212121;right:573.5px;transform:scaleX(1.0823);transform-origin:right;">39/1000</div>
<div class="t" id="t117" style="top:493px;font-size:12px;color:#757575;right:465.5px;transform:scaleX(1.0141);transform-origin:right;">Prix unitaire HT</div>
<div class="t" id="t118" style="top:512px;font-size:14px;color:#212121;-webkit-text-stroke:0.45px #212121;right:465.5px;">75,00 €</div>
<div class="t" id="t119" style="top:534px;font-size:12px;color:#757575;right:469.70000000000005px;">Remise</div>
<div class="t" id="t120" style="top:553px;font-size:14px;color:#2a83a6;-webkit-text-stroke:0.45px #2a83a6;right:469.70000000000005px;">-3,75 €</div>
<div class="t" id="t121" style="top:493px;font-size:12px;color:#757575;right:357.5px;transform:scaleX(1.0255);transform-origin:right;">Prix total HT</div>
<div class="t" id="t122" style="top:512px;font-size:14px;color:#212121;-webkit-text-stroke:0.45px #212121;right:357.5px;">75,00 €</div>
<div class="t" id="t123" style="top:534px;font-size:12px;color:#757575;right:357.5px;transform:scaleX(1.0071);transform-origin:right;">Avec remise</div>
<div class="t" id="t124" style="top:553px;font-size:14px;color:#212121;-webkit-text-stroke:0.45px #212121;right:357.5px;">71,25 €</div>
<div class="t" id="t125" style="top:643px;font-size:15px;color:#212121;left:314.5px;transform:scaleX(0.9116);transform-origin:left;">Remise globale :</div>
<div class="t" id="t126" style="top:641px;font-size:16px;color:#212121;right:1112px;">5</div>
<div class="t" id="t127" style="top:641px;font-size:16px;color:#212121;right:1087.2px;transform:scaleX(0.8000);transform-origin:right;">%</div>
<div class="t" id="t128" style="top:636px;font-size:12px;color:#757575;right:780.2px;transform:scaleX(0.9466);transform-origin:right;">TOTAL HORS REMISE HT</div>
<div class="t" id="t129" style="top:654px;font-size:14px;color:#212121;-webkit-text-stroke:0.45px #212121;right:780.2px;">230,90 €</div>
<div class="t" id="t130" style="top:636px;font-size:12px;color:#757575;right:572.5px;">REMISE</div>
<div class="t" id="t131" style="top:654px;font-size:14px;color:#2a83a6;-webkit-text-stroke:0.45px #2a83a6;right:572.5px;">-11,54 €</div>
<div class="t" id="t132" style="top:636px;font-size:12px;color:#757575;right:365.5px;">TOTAL HT</div>
<div class="t" id="t133" style="top:654px;font-size:14px;color:#212121;-webkit-text-stroke:0.45px #212121;right:365.5px;">219,36 €</div>
<div class="t" id="t134" style="top:692px;font-size:12px;color:#757575;left:314.5px;transform:scaleX(0.9831);transform-origin:left;">Date de fin d'exécution</div>
<div class="t" id="t135" style="top:711px;font-size:16px;color:#212121;left:328.5px;transform:scaleX(1.0671);transform-origin:left;">25/04/2019</div>
<div class="t" id="t136" style="top:713px;font-size:14px;color:#212121;left:908.2px;transform:scaleX(0.9822);transform-origin:left;">Durée de la prestation :</div>
<div class="t" id="t137" style="top:711px;font-size:16px;color:#212121;left:1193px;transform:translateX(-50%);">0</div>
<div class="t" id="t138" style="top:712px;font-size:15px;color:#212121;left:1251.7px;transform:scaleX(0.9581);transform-origin:left;">Jours</div>
<div class="t" id="t139" style="top:762px;font-size:15px;color:#fff;left:356.2px;transform:scaleX(0.8771);transform-origin:left;">INFORMATIONS COMPLÉMENTAIRES</div>
<div class="t" id="t140" style="top:800px;font-size:15px;color:#fff;left:356.2px;transform:scaleX(0.8620);transform-origin:left;">MOYENS DE PAIEMENT, DÉLAIS ET FACTURATION</div>
<div class="t" id="t141" style="top:848px;font-size:12px;color:#757575;font-style:italic;left:316.2px;transform:scaleX(1.0064);transform-origin:left;">Information obligatoire</div>
<div class="t" id="t142" style="top:848px;font-size:15px;color:#7cb342;-webkit-text-stroke:0.45px #7cb342;left:1138.6px;transform:scaleX(0.8672);transform-origin:left;">ANNULER</div>
<div class="t" id="t143" style="top:848px;font-size:15px;color:#7cb342;-webkit-text-stroke:0.45px #7cb342;left:1252.6px;transform:scaleX(0.8735);transform-origin:left;">AJOUTER</div>
</div>
</body></html>
